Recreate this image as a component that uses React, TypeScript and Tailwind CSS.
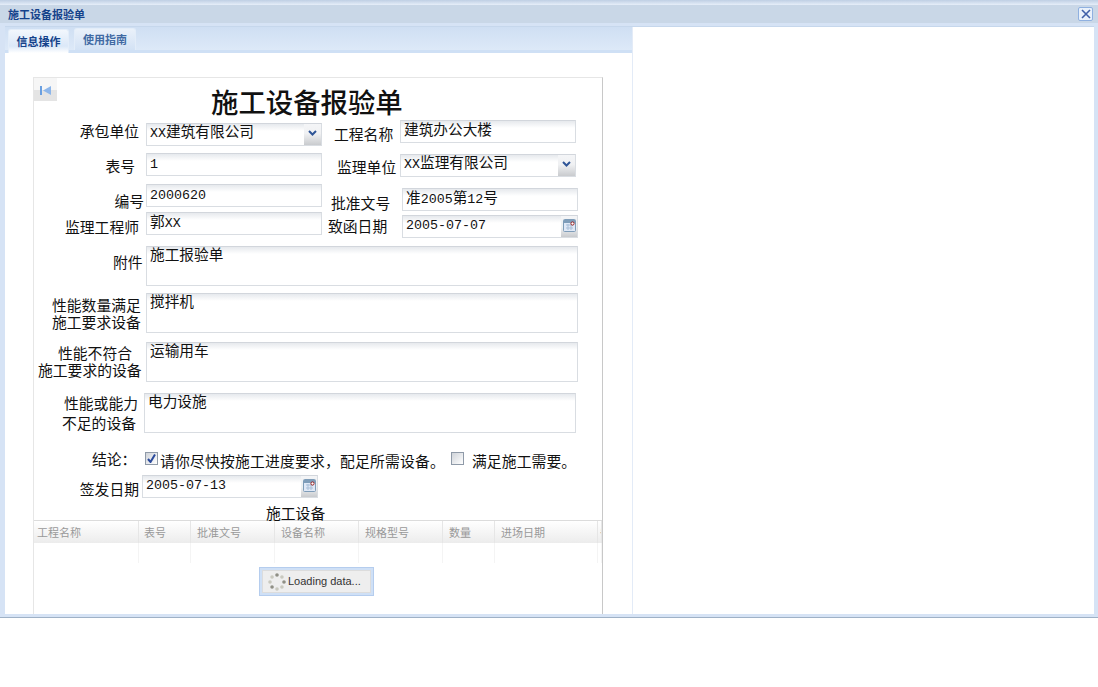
import type { ReactNode } from "react";

const INPUT_BG = "border border-[#d9dde2] border-t-[#d2d6dc] bg-[linear-gradient(#e6e9ed,#ffffff_7px)]";
const FONT_LABEL = "font-['Noto_Sans_CJK_SC','Noto_Sans',sans-serif]";

const COLUMNS = [
  { title: "工程名称", cls: "w-[105px] shrink-0 pl-[3px]" },
  { title: "表号", cls: "w-[52px] shrink-0 pl-[5px]" },
  { title: "批准文号", cls: "w-[84px] shrink-0 pl-[6px]" },
  { title: "设备名称", cls: "w-[84px] shrink-0 pl-[6px]" },
  { title: "规格型号", cls: "w-[84px] shrink-0 pl-[6px]" },
  { title: "数量", cls: "w-[52px] shrink-0 pl-[6px]" },
  { title: "进场日期", cls: "w-[103px] shrink-0 pl-[6px]" },
  { title: "备注", cls: "min-w-0 flex-1 overflow-hidden whitespace-nowrap pl-[2px]" },
];

// field values: latin runs are narrower than the CJK ones in the original
function Mixed({ value }: { value: string }) {
  return (
    <>
      {value.split(/([\x00-\x7f]+)/).map((run, i) =>
        i % 2 === 1 ? (
          <span key={i} className="font-['Liberation_Mono',monospace] text-[13.33px]">
            {run}
          </span>
        ) : (
          <span key={i} className="font-['Noto_Sans_CJK_SC',sans-serif] text-[14.67px]">
            {run}
          </span>
        )
      )}
    </>
  );
}

function TextBox({ value, className = "" }: { value: string; className?: string }) {
  return (
    <div className={`h-[23px] w-[176px] pl-[3px] leading-[15px] text-[#111] ${INPUT_BG} ${className}`}>
      <Mixed value={value} />
    </div>
  );
}

function ComboBox({ value, className = "" }: { value: string; className?: string }) {
  return (
    <div className={`flex h-[23px] w-[176px] leading-[13px] text-[#111] ${INPUT_BG} ${className}`}>
      <span className="flex-1 pl-[3px]">
        <Mixed value={value} />
      </span>
      <span className="flex w-[17px] shrink-0 items-start justify-center bg-[linear-gradient(#f4f5f7,#f0f1f3_45%,#c9cbce)] pt-[6px]">
        <svg width="9" height="6" viewBox="0 0 9 6">
          <path d="M1 1 L4.5 4.5 L8 1" fill="none" stroke="#2f5597" strokeWidth="2" />
        </svg>
      </span>
    </div>
  );
}

function DateBox({ value, className = "" }: { value: string; className?: string }) {
  return (
    <div className={`flex h-[23px] w-[176px] leading-[13px] text-[#111] ${INPUT_BG} ${className}`}>
      <span className="flex-1 pl-[3px]">
        <Mixed value={value} />
      </span>
      <span className="flex w-[16px] shrink-0 justify-center bg-[linear-gradient(#f4f5f7,#eef0f2_55%,#c9cbce)] pt-[3px]">
        <svg width="13" height="13" viewBox="0 0 13 13">
          <rect x="0.5" y="0.5" width="12" height="12" rx="1" fill="#dfe8f6" stroke="#7f9db9" />
          <rect x="1" y="1" width="11" height="3" fill="#7f9db9" />
          <path d="M3 6H10M3 9H10M5 5V11M8 5V11" stroke="#a9bfd8" />
          <circle cx="9.5" cy="4.5" r="1.6" fill="#fff" stroke="#9a2020" />
        </svg>
      </span>
    </div>
  );
}

function Label({ children, className = "" }: { children: ReactNode; className?: string }) {
  return (
    <div className={`shrink-0 whitespace-nowrap text-right text-[14.8px] leading-[17px] text-[#111] ${FONT_LABEL} ${className}`}>
      {children}
    </div>
  );
}

function AreaRow({
  lines,
  value,
  labelCls,
  className = "",
}: {
  lines: ReactNode;
  value: string;
  labelCls: string;
  className?: string;
}) {
  return (
    <div className={`flex h-[40px] ${className}`}>
      <div className={`w-[112px] shrink-0 text-[14.8px] text-[#111] ${FONT_LABEL} ${labelCls}`}>{lines}</div>
      <div className={`h-[40px] w-[432px] pl-[3px] leading-[13px] text-[#111] ${INPUT_BG}`}>
        <Mixed value={value} />
      </div>
    </div>
  );
}

function Checkbox({ checked }: { checked?: boolean }) {
  return (
    <span className="flex h-[13px] w-[13px] shrink-0 items-center justify-center border border-[#8f9aa8] bg-[linear-gradient(135deg,#cfd3d9,#ffffff)]">
      {checked && (
        <svg width="9" height="9" viewBox="0 0 9 9">
          <path d="M1 5 L3.5 8 L8 0.5" fill="none" stroke="#2a4a9c" strokeWidth="2" />
        </svg>
      )}
    </span>
  );
}

function Spinner() {
  const dots = [0, 45, 90, 135, 180, 225, 270, 315];
  return (
    <svg width="18" height="18" viewBox="0 0 18 18">
      {dots.map((a, i) => (
        <circle
          key={a}
          cx={9 + 7 * Math.cos((a * Math.PI) / 180)}
          cy={9 + 7 * Math.sin((a * Math.PI) / 180)}
          r="1.8"
          fill={i % 3 === 0 ? "#8f8f85" : "#c9c9bf"}
        />
      ))}
    </svg>
  );
}

function ReportForm() {
  return (
    <div className="relative h-[537px] w-[570px] overflow-hidden border border-b-0 border-[#e6e6e6] border-r-[#c8c8c8] bg-white">
      {/* collapse tool */}
      <div className="absolute left-0 top-0 flex h-[23px] w-[23px] justify-center bg-[linear-gradient(#f6f6f6_50%,#e4e4e4_50%)] pt-[8px]">
        <svg width="12" height="9" viewBox="0 0 12 9">
          <rect x="0" y="0" width="2" height="9" fill="#6a9fe0" />
          <path d="M11 0 V9 L3 4.5 Z" fill="#8db6ea" />
        </svg>
      </div>

      <h1 className="ml-[177px] h-[42px] whitespace-nowrap pt-[5px] text-[27.4px] font-medium leading-[36px] text-[#111] font-['Noto_Sans_CJK_SC',sans-serif]">
        施工设备报验单
      </h1>

      <div className="flex">
        {/* left column */}
        <div className="w-[288px] shrink-0">
          <div className="mt-[3px] flex h-[23px]">
            <Label className="-mt-[1px] w-[105px]">承包单位</Label>
            <ComboBox value="XX建筑有限公司" className="ml-[7px]" />
          </div>
          <div className="mt-[7px] flex h-[23px]">
            <Label className="mt-[4px] w-[101px]">表号</Label>
            <TextBox value="1" className="ml-[11px]" />
          </div>
          <div className="mt-[8px] flex h-[23px]">
            <Label className="mt-[8px] w-[110px]">编号</Label>
            <TextBox value="2000620" className="ml-[2px]" />
          </div>
          <div className="mt-[5px] flex h-[23px]">
            <Label className="mt-[6px] w-[105px]">监理工程师</Label>
            <TextBox value="郭XX" className="ml-[7px]" />
          </div>
        </div>

        {/* right column */}
        <div className="flex-1">
          <div className="flex h-[23px]">
            <Label className="ml-[12px] mt-[5px] w-[59px]">工程名称</Label>
            <TextBox value="建筑办公大楼" className="ml-[7px]" />
          </div>
          <div className="mt-[11px] flex h-[23px]">
            <Label className="ml-[15px] mt-[4px] w-[59px]">监理单位</Label>
            <ComboBox value="XX监理有限公司" className="ml-[4px]" />
          </div>
          <div className="mt-[11px] flex h-[23px]">
            <Label className="ml-[9px] mt-[6px] w-[59px]">批准文号</Label>
            <TextBox value="准2005第12号" className="ml-[12px]" />
          </div>
          <div className="mt-[4px] flex h-[23px]">
            <Label className="ml-[6px] mt-[2px] w-[59px]">致函日期</Label>
            <DateBox value="2005-07-07" className="ml-[15px]" />
          </div>
        </div>
      </div>

      <div className="mt-[8px] flex flex-col">
        <AreaRow lines="附件" value="施工报验单" labelCls="pl-[79px] pt-[7px] leading-[17px]" />
        <AreaRow
          className="mt-[7px]"
          lines={
            <>
              性能数量满足
              <br />
              施工要求设备
            </>
          }
          value="搅拌机"
          labelCls="pl-[18px] pt-[3px] leading-[17px] whitespace-nowrap"
        />
        <AreaRow
          className="mt-[9px]"
          lines={
            <>
              <span className="pl-[20px]">性能不符合</span>
              <br />
              施工要求的设备
            </>
          }
          value="运输用车"
          labelCls="pl-[4px] pt-[2px] leading-[17px] whitespace-nowrap"
        />
        <AreaRow
          className="-ml-[2px] mt-[11px]"
          lines={
            <>
              性能或能力
              <br />
              <span className="-ml-[2px]">不足的设备</span>
            </>
          }
          value="电力设施"
          labelCls="pl-[32px] leading-[20px] whitespace-nowrap"
        />
      </div>

      <div className={`ml-[58px] mt-[19px] flex h-[15px] items-start text-[14.8px] leading-[17px] text-[#111] ${FONT_LABEL}`}>
        <span className="-mt-[2px] w-[53px]">结论：</span>
        <Checkbox checked />
        <span className="ml-[2px] whitespace-nowrap tracking-[0.2px]">请你尽快按施工进度要求，配足所需设备。</span>
        <span className="ml-[6px]">
          <Checkbox />
        </span>
        <span className="ml-[8px] whitespace-nowrap tracking-[0.1px]">满足施工需要。</span>
      </div>

      <div className="mt-[8px] flex h-[23px]">
        <Label className="mt-[5px] w-[105px]">签发日期</Label>
        <DateBox value="2005-07-13" className="ml-[3px]" />
      </div>

      <div className={`ml-[232px] mt-[7px] h-[15px] whitespace-nowrap text-[14.8px] leading-[16px] text-[#111] ${FONT_LABEL}`}>
        施工设备
      </div>

      {/* grid */}
      <div className={`flex h-[23px] border-t border-[#dcdcdc] bg-[linear-gradient(#ffffff,#ececec)] text-[11px] leading-[22px] text-[#999] ${FONT_LABEL}`}>
        {COLUMNS.map((c, i) => (
          <div key={i} className={`h-full border-r border-[#e6e6e6] ${c.cls}`}>
            {c.title}
          </div>
        ))}
      </div>
      <div className="flex h-[20px]">
        {COLUMNS.map((c, i) => (
          <div key={i} className={`h-full border-r border-[#f4f4f4] ${c.cls}`} />
        ))}
      </div>

      <div className="ml-[225px] mt-[4px] h-[29px] w-[115px] border border-[#b5cdee] bg-[#cfe0f6] p-[2px]">
        <div className="flex h-full items-center border border-[#dcdcdc] bg-[#eeeeee] pl-[5px] text-[11px] text-[#333] font-['Liberation_Sans',sans-serif]">
          <Spinner />
          <span className="ml-[2px]">Loading data...</span>
        </div>
      </div>
    </div>
  );
}

export default function App() {
  return (
    <div className="h-[687px] w-[1098px] overflow-hidden bg-white">
      {/* ── Window ── */}
      <div className="flex h-[618px] flex-col border-b border-[#9fb1c6] bg-[#d6e3f5]">
        <div className="h-[5px] shrink-0 bg-[linear-gradient(#bfcfe4,#e6eef9)]" />

        {/* title bar */}
        <div className="flex h-[18px] shrink-0 items-center justify-between bg-[#c9d7e7] pl-[8px] pr-[5px]">
          <span className="text-[11px] font-bold text-[#15428b] font-['Noto_Sans_CJK_SC',sans-serif]">
            施工设备报验单
          </span>
          <span className="flex h-[14px] w-[15px] items-center justify-center rounded-[2px] border border-[#8fb0e0] bg-[#e9f1fb]">
            <svg width="10" height="10" viewBox="0 0 10 10">
              <path d="M1 1 L9 9 M9 1 L1 9" stroke="#3f5fa8" strokeWidth="1.6" />
            </svg>
          </span>
        </div>

        {/* body */}
        <div className="ml-[5px] mr-[4px] mt-[3px] flex min-h-0 flex-1 border-t border-[#c6d7ec] bg-white">
          {/* left panel */}
          <div className="flex w-[628px] shrink-0 flex-col border-r border-[#e3ebf7]">
            <div className="flex h-[26px] shrink-0 items-end gap-[5px] border-b-[3px] border-[#cfe0f5] bg-[linear-gradient(#cfdff3,#dde9f8)] pl-[3px]">
              <div className="-mb-[3px] flex h-[24px] w-[61px] justify-center rounded-t-[3px] border border-b-0 border-[#e3edf9] bg-[linear-gradient(#f2f7fd,#dbe8f8_70%,#ffffff)] pt-[3px] text-[11px] font-bold leading-[16px] text-[#15428b] font-['Noto_Sans_CJK_SC',sans-serif]">
                信息操作
              </div>
              <div className="flex h-[22px] w-[62px] justify-center rounded-t-[3px] border border-b-0 border-[#e3edf9] bg-[linear-gradient(#eaf1fa,#d3e2f5)] pt-[2px] text-[11px] font-bold leading-[16px] text-[#416aa3] font-['Noto_Sans_CJK_SC',sans-serif]">
                使用指南
              </div>
            </div>
            <div className="min-h-0 flex-1 pl-[28px] pt-[24px]">
              <ReportForm />
            </div>
          </div>
          {/* right panel */}
          <div className="flex-1 bg-white" />
        </div>

        {/* bottom frame */}
        <div className="h-[3px] shrink-0" />
      </div>
    </div>
  );
}
